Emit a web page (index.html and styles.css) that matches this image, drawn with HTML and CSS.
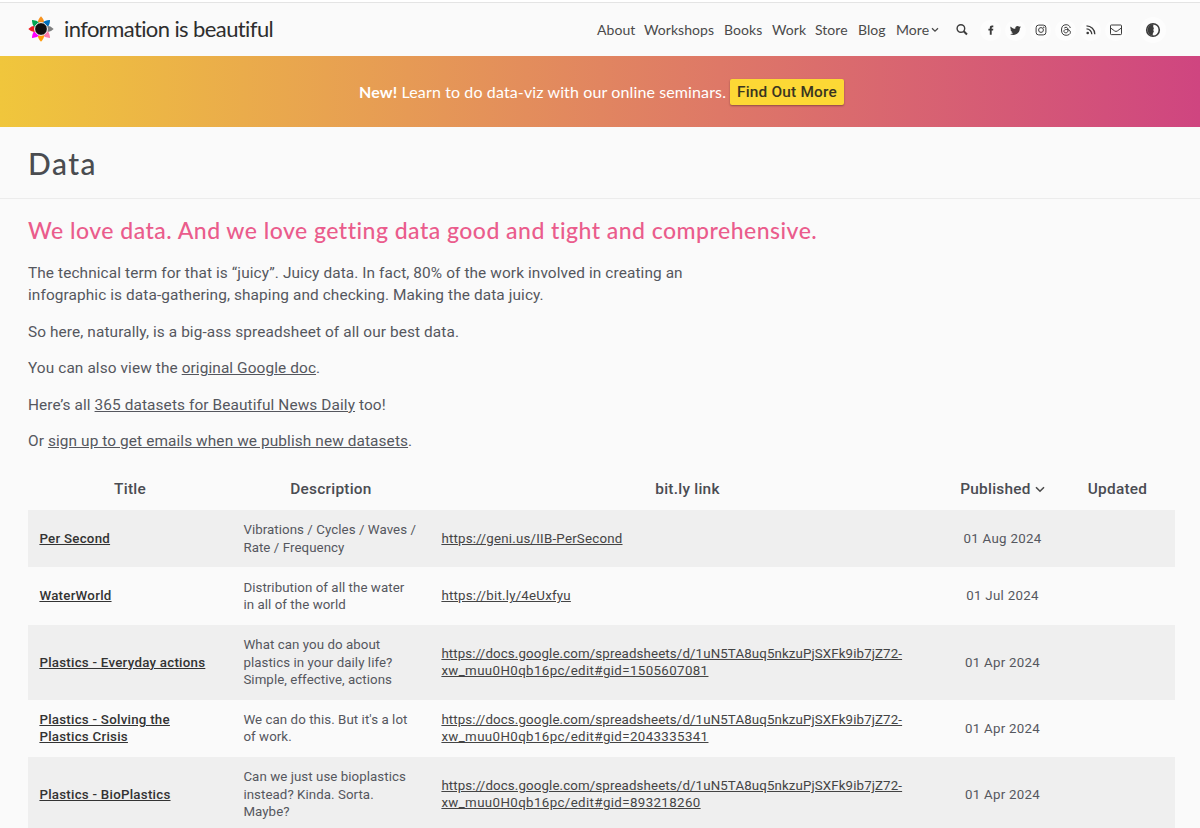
FILE: index.html
```html
<!DOCTYPE html>
<html lang="en">
<head>
    <meta charset="UTF-8">
    <meta name="viewport" content="width=device-width, initial-scale=1.0">
    <title>Data - Information is Beautiful</title>
    <link rel="stylesheet" href="styles.css">
</head>
<body>
    <header class="site-header">
        <a class="logo" href="#">
            <svg class="logo-mark" width="26" height="26" viewBox="-13 -13 26 26">
                <path fill="#f7931e" d="M-3.2-5.5Q-3.4-9.5 0-12.7Q3.4-9.5 3.2-5.5Z"/>
                <path fill="#0071bc" transform="rotate(45)" d="M-3.2-5.5Q-3.4-9.5 0-12.7Q3.4-9.5 3.2-5.5Z"/>
                <path fill="#808080" transform="rotate(90)" d="M-3.2-5.5Q-3.4-9.5 0-12.7Q3.4-9.5 3.2-5.5Z"/>
                <path fill="#ff7bac" transform="rotate(135)" d="M-3.2-5.5Q-3.4-9.5 0-12.7Q3.4-9.5 3.2-5.5Z"/>
                <path fill="#ff9c0a" transform="rotate(180)" d="M-3.2-5.5Q-3.4-9.5 0-12.7Q3.4-9.5 3.2-5.5Z"/>
                <path fill="#f0f" transform="rotate(225)" d="M-3.2-5.5Q-3.4-9.5 0-12.7Q3.4-9.5 3.2-5.5Z"/>
                <path fill="#ed1c24" transform="rotate(270)" d="M-3.2-5.5Q-3.4-9.5 0-12.7Q3.4-9.5 3.2-5.5Z"/>
                <path fill="#00a651" transform="rotate(315)" d="M-3.2-5.5Q-3.4-9.5 0-12.7Q3.4-9.5 3.2-5.5Z"/>
                <circle r="6.4" fill="#111" stroke="#fff" stroke-width="1"/>
            </svg>
            <span class="logo-text">information is beautiful</span>
        </a>
        <nav class="main-nav">
            <a class="n-about" href="#">About</a>
            <a class="n-workshops" href="#">Workshops</a>
            <a class="n-books" href="#">Books</a>
            <a class="n-work" href="#">Work</a>
            <a class="n-store" href="#">Store</a>
            <a class="n-blog" href="#">Blog</a>
            <a class="n-more" href="#">More</a>
            <svg class="chevron" width="8" height="6" viewBox="0 0 8 6"><path d="M1 1.2L4 4.2L7 1.2"/></svg>
        </nav>
        <div class="icons">
            <a class="icon search" href="#"><svg width="12" height="12" viewBox="0 0 12 12"><circle class="line" cx="4.9" cy="4.5" r="3.8" stroke-width="1.4"/><path class="line" stroke-width="2" d="M7.7 7.3L11 10.5"/></svg></a>
            <a class="icon" href="#"><svg width="12" height="12" viewBox="0 0 12 12"><path d="M4.8 10.7V6.4H3.4V4.8h1.4V3.7C4.8 2.3 5.6 1.5 7 1.5h1.3v1.7h-.9c-.5 0-.7.2-.7.7v.9h1.6L8.1 6.4H6.7v4.3z"/></svg></a>
            <a class="icon" href="#"><svg width="11" height="11" viewBox="0 0 24 24"><path d="M23.9 4.6a10 10 0 0 1-2.8.8 5 5 0 0 0 2.1-2.7c-.9.6-2 1-3.1 1.2a4.9 4.9 0 0 0-8.4 4.5C7.7 8.2 4 6.2 1.6 3.2a4.9 4.9 0 0 0 1.5 6.6 5 5 0 0 1-2.2-.6v.1a4.9 4.9 0 0 0 3.9 4.8 5 5 0 0 1-2.2.1 4.9 4.9 0 0 0 4.6 3.4A9.9 9.9 0 0 1 0 19.5 14 14 0 0 0 7.5 21.7c9.1 0 14-7.500 14-14v-.6a10 10 0 0 0 2.400-2.500z"/></svg></a>
            <a class="icon" href="#"><svg width="12" height="12" viewBox="0 0 12 12"><rect class="line" x="1.1" y="1.1" width="9.8" height="9.8" rx="2.6"/><circle class="line" cx="6" cy="6" r="2.4"/><circle cx="8.8" cy="3.2" r=".7"/></svg></a>
            <a class="icon" href="#"><svg width="12" height="12" viewBox="0 0 12 12"><path class="line" d="M10.3 4C9.7 1.8 8.3.7 6.1.7C3 .7 1.5 2.7 1.5 6s1.5 5.3 4.6 5.3c2.4 0 4.3-1.2 4.3-3C10.4 6.5 8.7 5.5 6.5 5.5C4.9 5.5 3.9 6.1 3.9 7.2c0 1 .9 1.6 1.9 1.6c1.5 0 2.3-1 2.2-2.7C8 4.3 7.3 3.3 6 3.3c-.8 0-1.4.3-1.800.9"/></svg></a>
            <a class="icon" href="#"><svg width="12" height="12" viewBox="0 0 12 12"><circle cx="2.7" cy="9" r="1.3"/><path class="line" stroke-width="1.3" d="M1.500 4.900a5.300 5.300 0 0 1 5.300 5.300M1.500 1.900a8.300 8.300 0 0 1 8.300 8.300"/></svg></a>
            <a class="icon" href="#"><svg width="12" height="12" viewBox="0 0 12 12"><rect class="line" x=".5" y="1" width="11" height="9.600" rx=".8"/><path class="line" d="M.8 4.100L4.700 7q1.300.9 2.600 0L11.200 4.100"/></svg></a>
            <a class="icon contrast" href="#"><svg width="16" height="16" viewBox="0 0 16 16"><circle class="line" cx="8" cy="8" r="6.300" stroke-width="1.600"/><path d="M8.500 2A6 6 0 1 0 8.500 14Q7 12.500 8 11Q9.600 9.800 8.300 8Q9.500 6 8.200 4.800z"/></svg></a>
        </div>
    </header>

    <div class="banner">
        <span class="banner-text"><strong>New!</strong> Learn to do data-viz with our online seminars.</span>
        <a class="banner-btn" href="#">Find Out More</a>
    </div>

    <div class="title-bar">
        <h1>Data</h1>
    </div>

    <main class="content">
        <h2>We love data. And we love getting data good and tight and comprehensive.</h2>
        <p>The technical term for that is “juicy”. Juicy data. In fact, 80% of the work involved in creating an<br>infographic is data-gathering, shaping and checking. Making the data juicy.</p>
        <p>So here, naturally, is a big-ass spreadsheet of all our best data.</p>
        <p>You can also view the <a href="#">original Google doc</a>.</p>
        <p>Here’s all <a href="#">365 datasets for Beautiful News Daily</a> too!</p>
        <p>Or <a href="#">sign up to get emails when we publish new datasets</a>.</p>

        <table class="data-table">
            <colgroup>
                <col class="col-title">
                <col class="col-desc">
                <col class="col-link">
                <col class="col-date">
                <col class="col-date">
            </colgroup>
            <thead>
                <tr>
                    <th>Title</th>
                    <th>Description</th>
                    <th>bit.ly link</th>
                    <th>Published <svg class="sort" width="10" height="7" viewBox="0 0 10 7"><path d="M1 1.2L5 5.2L9 1.2"/></svg></th>
                    <th>Updated</th>
                </tr>
            </thead>
            <tbody>
                <tr>
                    <td class="title"><a href="#">Per Second</a></td>
                    <td class="desc">Vibrations / Cycles / Waves /<br>Rate / Frequency</td>
                    <td class="link short"><a href="#">https://geni.us/IIB-PerSecond</a></td>
                    <td class="date">01 Aug 2024</td>
                    <td></td>
                </tr>
                <tr>
                    <td class="title"><a href="#">WaterWorld</a></td>
                    <td class="desc">Distribution of all the water<br>in all of the world</td>
                    <td class="link short"><a href="#">https://bit.ly/4eUxfyu</a></td>
                    <td class="date">01 Jul 2024</td>
                    <td></td>
                </tr>
                <tr>
                    <td class="title"><a href="#">Plastics - Everyday actions</a></td>
                    <td class="desc">What can you do about<br>plastics in your daily life?<br>Simple, effective, actions</td>
                    <td class="link"><a href="#">https://docs.google.com/spreadsheets/d/1uN5TA8uq5nkzuPjSXFk9ib7jZ72-<br><span class="gid">xw_muu0H0qb16pc/edit#gid=1505607081</span></a></td>
                    <td class="date">01 Apr 2024</td>
                    <td></td>
                </tr>
                <tr>
                    <td class="title"><a href="#">Plastics - Solving the<br>Plastics Crisis</a></td>
                    <td class="desc">We can do this. But it's a lot<br>of work.</td>
                    <td class="link"><a href="#">https://docs.google.com/spreadsheets/d/1uN5TA8uq5nkzuPjSXFk9ib7jZ72-<br><span class="gid">xw_muu0H0qb16pc/edit#gid=2043335341</span></a></td>
                    <td class="date">01 Apr 2024</td>
                    <td></td>
                </tr>
                <tr>
                    <td class="title"><a href="#">Plastics - BioPlastics</a></td>
                    <td class="desc">Can we just use bioplastics<br>instead? Kinda. Sorta.<br>Maybe?</td>
                    <td class="link"><a href="#">https://docs.google.com/spreadsheets/d/1uN5TA8uq5nkzuPjSXFk9ib7jZ72-<br><span class="gid">xw_muu0H0qb16pc/edit#gid=893218260</span></a></td>
                    <td class="date">01 Apr 2024</td>
                    <td></td>
                </tr>
            </tbody>
        </table>
    </main>
</body>
</html>
```
FILE: styles.css
```css
* {
    box-sizing: border-box;
}
body {
    margin: 0;
    height: 828px;
    overflow: hidden;
    background-color: #fafafa;
    color: #55575e;
    font-family: Roboto, sans-serif;
    font-size: 15.4px;
    letter-spacing: 0.1px;
    line-height: 22px;
}
a {
    color: inherit;
}
.site-header {
    display: flex;
    align-items: center;
    height: 56px;
    padding: 2px 34px 0 28px;
    border-top: 2px solid #fff;
    box-shadow: inset 0 1px 0 #e4e4e4;
    font-family: Lato, sans-serif;
}
.logo {
    display: flex;
    align-items: center;
    gap: 10px;
    margin-top: -2px;
    text-decoration: none;
    color: #2e2e2e;
}
.logo-text {
    font-size: 22px;
    letter-spacing: -0.6px;
    white-space: nowrap;
}
.main-nav {
    display: flex;
    align-items: center;
    margin-left: auto;
    color: #4a4a4a;
    font-size: 14px;
    letter-spacing: 0.05px;
}
.main-nav a {
    text-decoration: none;
    white-space: nowrap;
}
.n-about { width: 47px; }
.n-workshops { width: 80px; }
.n-books { width: 48px; }
.n-work { width: 43px; }
.n-store { width: 43px; }
.n-blog { width: 38px; }
.n-more { width: 35px; }
.chevron,
.sort {
    fill: none;
    stroke: #4a4a4a;
    stroke-width: 1.3;
}
.icons {
    display: flex;
    align-items: center;
    margin-left: 12px;
}
.icon {
    display: flex;
    align-items: center;
    justify-content: center;
    width: 21px;
    height: 21px;
    margin-right: 4px;
    border-radius: 50%;
    background-color: #fdfdfd;
}
.icon svg {
    fill: #3c3c3c;
}
.icon .line {
    fill: none;
    stroke: #3c3c3c;
}
.icon.search {
    margin-right: 8px;
    background: none;
}
.icon.contrast {
    width: 26px;
    height: 26px;
    margin: -1px 0 0 10px;
}
.banner {
    display: flex;
    align-items: center;
    justify-content: center;
    gap: 4px;
    height: 71px;
    padding-left: 3px;
    background: linear-gradient(90deg, #f0c63c 0%, #e69a55 34%, #de7867 60%, #cf4580 100%);
    color: #fff;
    font-family: Lato, sans-serif;
    font-size: 16px;
}
.banner-text {
    width: 367px;
    letter-spacing: 0.12px;
    white-space: nowrap;
}
.banner-btn {
    width: 114px;
    height: 26px;
    border-radius: 2px;
    background-color: #fdd835;
    box-shadow: 0 1px 2px rgba(0, 0, 0, 0.35);
    color: #3a3520;
    font-family: Roboto, sans-serif;
    font-size: 15.4px;
    font-weight: 500;
    letter-spacing: 0.2px;
    line-height: 27px;
    text-align: center;
    text-decoration: none;
}
.title-bar {
    height: 72px;
    padding-left: 28px;
    border-bottom: 1px solid #ececec;
}
h1 {
    margin: 0;
    color: #4a4c50;
    font-family: Lato, sans-serif;
    font-size: 30px;
    font-weight: 500;
    letter-spacing: 1.5px;
    line-height: 73px;
}
.content {
    padding: 15px 25px 0 28px;
}
h2 {
    margin: 0 0 16px;
    color: #ea5c8c;
    font-family: Lato, sans-serif;
    font-size: 23px;
    font-weight: 500;
    letter-spacing: 0.48px;
    line-height: 32px;
    white-space: nowrap;
}
p {
    margin: 0 0 14.5px;
}
.data-table {
    width: 1147px;
    margin-top: 16px;
    border-collapse: collapse;
    table-layout: fixed;
}
.col-title { width: 204px; }
.col-desc { width: 198px; }
.col-link { width: 515px; }
.col-date { width: 115px; }
th {
    height: 42px;
    padding: 0;
    color: #4a4c52;
    font-weight: 500;
    letter-spacing: 0.25px;
}
.sort {
    stroke-width: 1.6;
    vertical-align: 1px;
}
td {
    padding: 11.4px;
    font-size: 13.3px;
    letter-spacing: 0.06px;
    line-height: 17.33px;
    white-space: nowrap;
}
tbody tr:nth-child(odd) {
    background-color: #efefef;
}
.title {
    color: #333;
    font-weight: 500;
    letter-spacing: 0.26px;
}
.link {
    color: #444;
    letter-spacing: 0.12px;
}
.link.short {
    letter-spacing: 0.22px;
}
.gid {
    letter-spacing: 0.38px;
}
.date {
    padding-left: 0;
    padding-right: 0;
    letter-spacing: 0.28px;
    text-align: center;
}
```
